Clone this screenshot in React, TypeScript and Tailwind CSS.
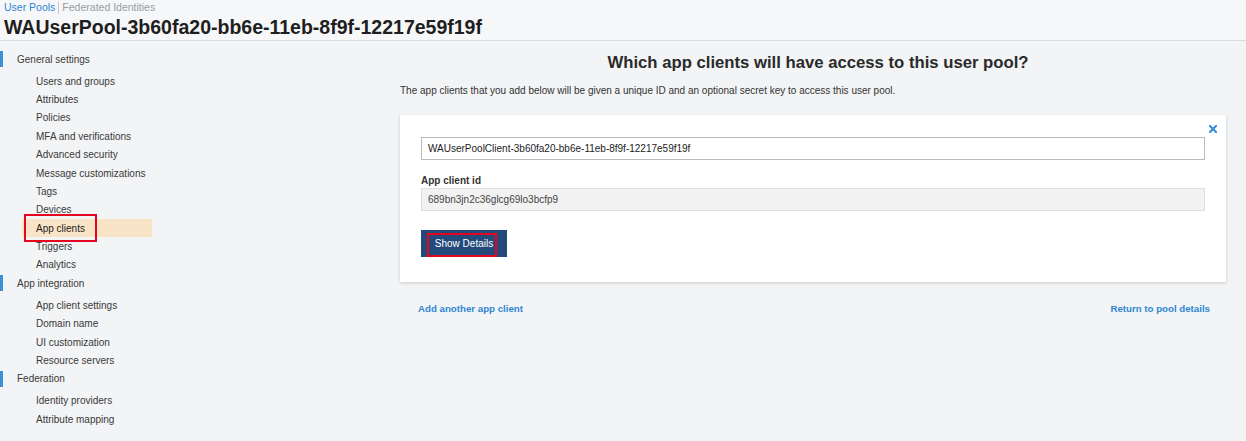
const sections = [
  {
    title: 'General settings',
    items: [
      'Users and groups',
      'Attributes',
      'Policies',
      'MFA and verifications',
      'Advanced security',
      'Message customizations',
      'Tags',
      'Devices',
      'App clients',
      'Triggers',
      'Analytics',
    ],
  },
  {
    title: 'App integration',
    items: ['App client settings', 'Domain name', 'UI customization', 'Resource servers'],
  },
  {
    title: 'Federation',
    items: ['Identity providers', 'Attribute mapping'],
  },
];

export default function App() {
  return (
    <div className="min-h-screen bg-[#f2f4f5] font-['Liberation_Sans',Arial,sans-serif] text-[#333]">
      {/* Header */}
      <div className="h-[41px] border-b border-[#dadddf] bg-[#f6f7f8] px-[4px] pt-[1px]">
        <div className="flex items-center text-[10.5px] leading-[13px]">
          <span className="text-[#2f86d3]">User Pools</span>
          <span className="mx-[3px] h-[12px] w-px bg-[#c4c7c9]" />
          <span className="text-[#9a9d9f]">Federated Identities</span>
        </div>
        <h1 className="mt-[1px] text-[19.5px] font-bold leading-[24px] text-[#1e1e1e]">
          WAUserPool-3b60fa20-bb6e-11eb-8f9f-12217e59f19f
        </h1>
      </div>

      <div className="flex">
        {/* Sidebar */}
        <aside className="w-[180px] shrink-0 pt-[9px] text-[10px] text-[#3a3a3a]">
          {sections.map((s) => (
            <div key={s.title}>
              <div className="relative flex h-[18.4px] items-center pl-[17px]">
                <span className="absolute left-0 top-[1px] h-[16px] w-[3px] bg-[#3d8fd8]" />
                {s.title}
              </div>
              <ul className="pt-[3.5px]">
                {s.items.map((item) => (
                  <li key={item} className="pl-[22px]">
                    <div
                      className={`relative flex h-[18.4px] w-[130px] items-center pl-[14px] ${
                        item === 'App clients' ? 'bg-[#f9e4c7] text-[#222]' : ''
                      }`}
                    >
                      {item}
                      {item === 'App clients' && (
                        <span className="absolute left-[2px] top-[-5px] h-[28px] w-[73px] border-2 border-[#e5051f]" />
                      )}
                    </div>
                  </li>
                ))}
              </ul>
            </div>
          ))}
        </aside>

        {/* Main */}
        <main className="flex-1 pl-[220px] pr-[20px] pt-[12px]">
          <h2 className="pl-[10px] text-center text-[16.7px] font-bold leading-[20px] text-[#2a2a2a]">
            Which app clients will have access to this user pool?
          </h2>
          <p className="mt-[11px] text-[10px] leading-[13px] text-[#333]">
            The app clients that you add below will be given a unique ID and an optional secret key to access this user pool.
          </p>

          <div className="relative mt-[18px] bg-white px-[21px] pb-[25px] pt-[22px] shadow-[0_1px_3px_rgba(0,0,0,0.18)]">
            <svg
              className="absolute right-[9px] top-[10px]"
              width="8"
              height="8"
              viewBox="0 0 8 8"
            >
              <path d="M1 1L7 7M7 1L1 7" stroke="#3a8fdb" strokeWidth="2.2" strokeLinecap="square" />
            </svg>

            <div className="flex h-[23px] items-center border border-[#b9bcbe] px-[6px] text-[10px] text-[#222]">
              WAUserPoolClient-3b60fa20-bb6e-11eb-8f9f-12217e59f19f
            </div>

            <div className="mt-[13.5px] text-[10px] font-bold leading-[13px] text-[#333]">App client id</div>
            <div className="mt-[1.5px] flex h-[23px] items-center border border-[#dedfe0] bg-[#f2f2f2] px-[6px] text-[10px] text-[#444]">
              689bn3jn2c36glcg69lo3bcfp9
            </div>

            <div className="relative mt-[19px] flex h-[27px] w-[86px] items-center justify-center bg-[#244a7c] text-[10px] text-white">
              Show Details
              <span className="absolute left-[6px] top-[3px] h-[24px] w-[70px] border-2 border-[#e5051f]" />
            </div>
          </div>

          <div className="mt-[20px] flex justify-between px-[18px] text-[9.7px] font-bold leading-[13px] text-[#2f86d3]">
            <span>Add another app client</span>
            <span className="mr-[-2px]">Return to pool details</span>
          </div>
        </main>
      </div>
    </div>
  );
}
